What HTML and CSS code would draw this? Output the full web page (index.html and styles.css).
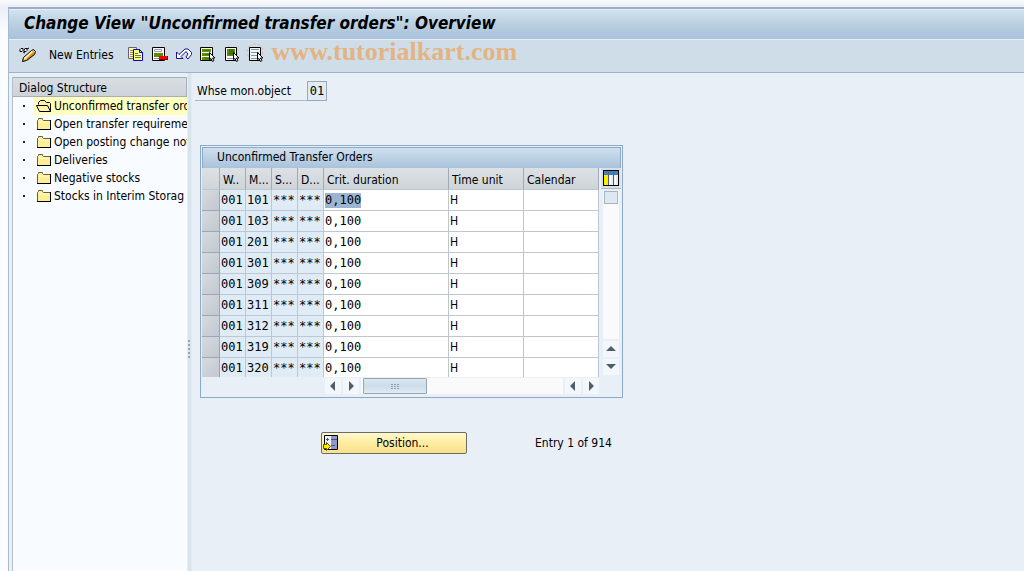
FILE: index.html
```html
<!DOCTYPE html>
<html lang="en">

<head>
    <meta charset="UTF-8">
    <meta name="viewport" content="width=device-width, initial-scale=1.0">
    <title>Change View "Unconfirmed transfer orders": Overview</title>
    <link rel="stylesheet" href="styles.css">
</head>

<body>

    <!-- Folder shapes used by the tree -->
    <svg class="defs" aria-hidden="true">
        <symbol id="folder" viewBox="0 0 14 12">
            <path d="M1 2h1V1h4v1h1v1h6v8H1z" fill="#ffee98"/>
            <path d="M.5 11V2.500l1-1V.5h4v1l1 1h7" fill="none" stroke="#6b6128"/>
            <path d="M0 11.500h14M13.500 2v10" fill="none" stroke="#000"/>
            <path d="M2 4h10" stroke="#fffbe0"/>
        </symbol>
        <symbol id="folder-open" viewBox="0 0 16 12">
            <path d="M2.500 4.500V2.500l2-2h4l2 2h3l1 1V11.500h-11l-3-6h11l3 6" fill="#fff3a8" stroke="#000"/>
        </symbol>
        <symbol id="cursor" viewBox="0 0 7 10">
            <path d="M.5.5v7l1.500-1 1.500 3 1.500-1-1.500-2.500h2.500z" fill="#fff" stroke="#000"/>
        </symbol>
    </svg>

    <div class="window">
        <h1 class="title">Change View "Unconfirmed transfer orders": Overview</h1>

        <div class="toolbar">
            <button type="button" class="tool" aria-label="Display / Change">
                <svg width="16" height="16" viewBox="0 0 16 16">
                    <path d="M0 2.500l1-1h2v2l-1 1H0zM4 3.500l1-2h2v2l-1 1H4zM7 2l2-1M3 5l2 1" fill="#fff" stroke="#000"/>
                    <path d="M3 12l8-8 3-1 1 3-8 7-4 2z" fill="#ffb031"/>
                    <path d="M4 12l8-8" stroke="#fff3c0" stroke-width="2"/>
                    <path d="M7 13l7-7" stroke="#e58a12" stroke-width="2"/>
                    <path d="M2.500 14.500l1-4 8-7 2-1 2 2-1 3-8 6z" fill="none" stroke="#000"/>
                </svg>
            </button>
            <button type="button" class="tool tool-text">New Entries</button>
            <button type="button" class="tool" aria-label="Copy As">
                <svg width="16" height="16" viewBox="0 0 16 16">
                    <path d="M.5.5h8v11h-8z" fill="#fff7a0" stroke="#666"/>
                    <path d="M2 3.500h4M2 5.500h4M2 7.500h4M2 9.500h4" stroke="#888"/>
                    <path d="M5.500 2.500h6l3 3v8h-9z" fill="#ffff80" stroke="#0000d0"/>
                    <path d="M11.500 2.500v3h3" fill="none" stroke="#0000d0"/>
                    <path d="M7 6.500h3M7 8.500h6M7 10.500h6" stroke="#6a7a50"/>
                </svg>
            </button>
            <button type="button" class="tool" aria-label="Delete">
                <svg width="16" height="16" viewBox="0 0 16 16">
                    <path d="M.5.5h12v13H.5z" fill="#fff" stroke="#000"/>
                    <path d="M2.500 2.500h7v2h-7z" fill="#fff" stroke="#9d9dc0"/>
                    <path d="M2 6h9v4H2z" fill="#5c8c00"/>
                    <path d="M2 11.500h5" stroke="#8d8db8"/>
                    <path d="M7 9h9v4H7z" fill="#800"/>
                    <path d="M7 9h8v3H7z" fill="#f00"/>
                </svg>
            </button>
            <button type="button" class="tool" aria-label="Undo Change">
                <svg width="16" height="16" viewBox="0 0 16 16">
                    <path d="M.5 5v6.500H7L5 9.500l5-5 2 2.500-2 3 2 2 3.500-4.500v-2L12 2H9L3 7.500z" fill="#fff" stroke="#161686"/>
                </svg>
            </button>
            <button type="button" class="tool" aria-label="Select All">
                <svg width="16" height="16" viewBox="0 0 16 16">
                    <path d="M.5.5h12v13H.5z" fill="#fff" stroke="#000"/>
                    <path d="M2 2h9v3H2zM2 6h9v3H2zM2 10h9v3H2z" fill="#5c8c00"/>
                    <path d="M5 3.500h4M5 7.500h4M5 11.500h4" stroke="#44740a"/>
                    <use href="#cursor" x="9" y="5" width="7" height="10"/>
                </svg>
            </button>
            <button type="button" class="tool" aria-label="Select Block">
                <svg width="16" height="16" viewBox="0 0 16 16">
                    <path d="M1.500.5h11v13h-11z" fill="#fff" stroke="#000"/>
                    <path d="M3 2h8v7H3z" fill="#5c8c00"/>
                    <path d="M5 2h5v6H5z" fill="#44740a"/>
                    <path d="M3 11.500h6" stroke="#8d8db8"/>
                    <use href="#cursor" x="9" y="5" width="7" height="10"/>
                </svg>
            </button>
            <button type="button" class="tool" aria-label="Deselect All">
                <svg width="16" height="16" viewBox="0 0 16 16">
                    <circle cx="7" cy="5" r="8" fill="none" stroke="#dcb9a0" stroke-dasharray="3 2"/>
                    <path d="M1.500.5h11v13h-11z" fill="#f4f6f8" stroke="#000"/>
                    <path d="M3 2.500h8M3 5.500h8M3 8.500h6M3 11.500h6" stroke="#7f97ac"/>
                    <use href="#cursor" x="9" y="5" width="7" height="10"/>
                </svg>
            </button>
            <span class="watermark">www.tutorialkart.com</span>
        </div>

        <div class="content">
            <nav class="tree">
                <h2>Dialog Structure</h2>
                <ul>
                    <li class="active"><a href="#"><svg width="16" height="12"><use href="#folder-open"/></svg>Unconfirmed transfer orders</a></li>
                    <li><a href="#"><svg width="16" height="12"><use href="#folder"/></svg>Open transfer requirements</a></li>
                    <li><a href="#"><svg width="16" height="12"><use href="#folder"/></svg>Open posting change notices</a></li>
                    <li><a href="#"><svg width="16" height="12"><use href="#folder"/></svg>Deliveries</a></li>
                    <li><a href="#"><svg width="16" height="12"><use href="#folder"/></svg>Negative stocks</a></li>
                    <li><a href="#"><svg width="16" height="12"><use href="#folder"/></svg>Stocks in Interim Storag</a></li>
                </ul>
            </nav>
            <div class="splitter"><i></i></div>

            <main class="main">
                <div class="field">
                    <label for="object">Whse mon.object</label>
                    <input type="text" id="object" value="01" readonly>
                </div>

                <section class="panel">
                    <h2>Unconfirmed Transfer Orders</h2>
                    <div class="grid">
                        <div class="table-clip">
                            <table>
                                <colgroup>
                                    <col class="c-sel"><col class="c-key"><col class="c-key"><col class="c-key"><col class="c-key">
                                    <col class="c-crit"><col class="c-unit"><col class="c-unit">
                                </colgroup>
                                <thead>
                                    <tr>
                                        <th></th>
                                        <th>W..</th>
                                        <th>M...</th>
                                        <th>S...</th>
                                        <th>D...</th>
                                        <th>Crit. duration</th>
                                        <th>Time unit</th>
                                        <th>Calendar</th>
                                    </tr>
                                </thead>
                                <tbody id="rows"></tbody>
                            </table>
                        </div>
                        <div class="vscroll">
                            <button type="button" class="config" aria-label="Configuration">
                                <svg width="16" height="16" viewBox="0 0 16 16">
                                    <path d="M0 0h16v16H0z" fill="#000"/>
                                    <path d="M1 1h14v14H1z" fill="#e8edf2"/>
                                    <path d="M1 1h14v4H1z" fill="#3e80c2"/>
                                    <path d="M1 5h5v10H1z" fill="#ffeb00"/>
                                    <path d="M5.500 2v13M10.500 2v13" stroke="#53616b"/>
                                    <path d="M7.500 6v8M12.500 6v8" stroke="#fff"/>
                                </svg>
                            </button>
                            <div class="vtrack"><i class="vthumb"></i></div>
                            <button type="button" class="arrow" aria-label="Scroll up"><svg width="10" height="6"><path d="M0 5l5-5 5 5z"/></svg></button>
                            <button type="button" class="arrow" aria-label="Scroll down"><svg width="10" height="6"><path d="M0 0l5 5 5-5z"/></svg></button>
                        </div>
                        <div class="hscroll">
                            <button type="button" class="arrow" aria-label="First column"><svg width="6" height="10"><path d="M5 0L0 5l5 5z"/></svg></button>
                            <button type="button" class="arrow" aria-label="Next column"><svg width="6" height="10"><path d="M1 0l5 5-5 5z"/></svg></button>
                            <div class="htrack">
                                <div class="hthumb"><svg width="9" height="5"><path d="M0 .5h2M3 .5h2M6 .5h2M0 2.500h2M3 2.500h2M6 2.500h2M0 4.500h2M3 4.500h2M6 4.500h2" stroke="#91a1af"/></svg></div>
                            </div>
                            <button type="button" class="arrow" aria-label="Previous column"><svg width="6" height="10"><path d="M5 0L0 5l5 5z"/></svg></button>
                            <button type="button" class="arrow" aria-label="Last column"><svg width="6" height="10"><path d="M1 0l5 5-5 5z"/></svg></button>
                        </div>
                    </div>
                </section>

                <div class="footer">
                    <button type="button" class="position">
                        <svg width="16" height="16" viewBox="0 0 16 16">
                            <path d="M1.500.5h13v14h-13z" fill="#eef2f6" stroke="#000"/>
                            <path d="M8 1h6v13H8z" fill="#8f98c8"/>
                            <path d="M3 4.500h3M4.500 3v3M8 4.500h6M8 10.500h4" stroke="#485478"/>
                            <path d="M.5 9.500h3v-2l4 4-4 4v-2h-3z" fill="#ffee00" stroke="#5a4c00"/>
                        </svg>
                        <span>Position...</span>
                    </button>
                    <span>Entry 1 of 914</span>
                </div>
            </main>
        </div>
    </div>

    <script src="script.js"></script>
</body>

</html>
```

FILE: styles.css
```css
* {
    box-sizing: border-box;
}

body {
    margin: 0;
    padding: 7px 0 0 8px;
    min-height: 100vh;
    display: flex;
    background: linear-gradient(#fafbfd, #eaeef5 7px, #fafcff 30px);
    font-family: 'DejaVu Sans Condensed', Tahoma, 'DejaVu Sans', sans-serif;
    font-size: 12px;
    line-height: 18px;
    color: #000;
}

button, input {
    font: inherit;
    color: inherit;
    border: 0;
    padding: 0;
    margin: 0;
    border-radius: 0;
    background: none;
}

svg {
    display: block;
    overflow: visible;
    flex: none;
}

.defs {
    position: absolute;
    width: 0;
    height: 0;
}

.window {
    flex: 1;
    min-width: 0;
    display: flex;
    flex-direction: column;
    border-top: 2px solid #9bb0c6;
    border-left: 1px solid #a9bacb;
    background: #e8eff7;
}

/* Title and toolbar */
.title {
    margin: 0;
    padding: 0 15px;
    height: 31px;
    line-height: 26px;
    font-size: 17px;
    font-style: italic;
    border-top: 1px solid #e6eff8;
    border-bottom: 1px solid #e6eff8;
    background: linear-gradient(#d2e2f0, #b9cfdf 50%, #a9c2dc);
}

.toolbar {
    display: flex;
    align-items: center;
    gap: 8px;
    height: 33px;
    padding: 0 11px 2px;
    background: #cfdde8;
    border-bottom: 1px solid #9fb3c9;
}

.tool-text {
    margin: 0 6px 0 5px;
}

.watermark {
    font-family: 'Liberation Serif', serif;
    font-size: 26px;
    font-weight: bold;
    line-height: 26px;
    color: #e3b483;
    padding-bottom: 6px;
}

.content {
    flex: 1;
    display: flex;
}

/* Dialog structure tree */
.tree {
    width: 175px;
    margin: 4px 1px 0 3px;
    border-left: 1px solid #b5bfc9;
    background: #f8fbff;
    overflow: hidden;
}

.tree h2 {
    margin: 0;
    padding: 0 6px;
    height: 20px;
    line-height: 20px;
    font-size: 12px;
    font-weight: normal;
    background: linear-gradient(#d9dee3, #cdd3da);
    border: 1px solid #a5afba;
    border-left: 0;
}

.tree ul {
    margin: 0;
    padding: 0;
    list-style: none;
}

.tree li {
    display: flex;
    align-items: center;
    height: 18px;
}

.tree li::before {
    content: '';
    flex: none;
    width: 2px;
    height: 2px;
    margin: 0 8px 0 10px;
    background: #222;
}

.tree a {
    flex: 1;
    display: flex;
    align-items: center;
    gap: 2px;
    padding-left: 3px;
    color: inherit;
    text-decoration: none;
    white-space: nowrap;
}

.tree .active a {
    background: #ffffbe;
}

.splitter {
    width: 4px;
    display: flex;
    align-items: center;
    border-right: 1px solid #e2ebf1;
    background: #d8e4eb;
}

.splitter i {
    width: 2px;
    height: 18px;
    margin-top: 54px;
    background: repeating-linear-gradient(#98a4b0 0 2px, #d8e4eb 2px 4px);
}

/* Main area */
.main {
    flex: 1;
    min-width: 0;
    padding: 8px 3px;
}

.field {
    display: flex;
    height: 20px;
    margin-bottom: 44px;
}

.field label {
    width: 112px;
    padding: 2px 2px 0;
    line-height: 17px;
    border-bottom: 1px solid #b4b4b4;
}

.field input {
    width: 20px;
    text-align: center;
    border: 1px solid #9da8b2;
    background: #dfebf5;
    font-family: 'DejaVu Sans Mono', monospace;
}

.panel {
    width: fit-content;
    margin-left: 5px;
    padding: 1px;
    border: 1px solid #8ca9c8;
}

.panel h2 {
    margin: 0;
    padding: 0 14px;
    height: 21px;
    line-height: 19px;
    font-size: 12px;
    font-weight: normal;
    border: 1px solid #8ca9c8;
    border-bottom: 0;
    background: linear-gradient(#cfe0ee, #a9c2dc);
}

.grid {
    display: grid;
    grid-template-columns: auto 20px;
    column-gap: 2px;
}

.table-clip {
    height: 209px;
    overflow: hidden;
}

table {
    width: 397px;
    border-collapse: separate;
    border-spacing: 0;
    table-layout: fixed;
}

.c-sel {
    width: 18px;
}

.c-key {
    width: 26px;
}

.c-crit {
    width: 125px;
}

.c-unit {
    width: 75px;
}

th, td {
    height: 21px;
    padding: 0 0 0 1px;
    overflow: hidden;
    white-space: nowrap;
    text-align: left;
    font-weight: normal;
    line-height: 18px;
    border-right: 1px solid #bcc7d3;
    border-bottom: 1px solid #bcc7d3;
}

th {
    height: 22px;
    padding: 3px 0 0 3px;
    background: linear-gradient(#dce1e5, #cfd4d9);
    border-right-color: #9fabb8;
}

td {
    background: #fff;
    font-family: 'DejaVu Sans Mono', monospace;
}

td.key {
    background: #dfebf5;
}

td.selector {
    padding: 0;
    border-color: #9aa6b2;
}

td button {
    display: block;
    width: 100%;
    height: 20px;
    background: linear-gradient(135deg, #d6dae0, #c2c8d0);
}

td input {
    display: block;
    width: 100%;
    height: 18px;
}

td.unit input {
    font-family: 'DejaVu Sans Condensed', Tahoma, sans-serif;
}

td input.marked {
    width: 36px;
    height: 15px;
    background: #9bb5d3;
}

/* Scroll bars */
.vscroll {
    display: flex;
    flex-direction: column;
    align-items: center;
    gap: 2px;
    padding-bottom: 2px;
}

.config {
    width: 100%;
    height: 21px;
    display: grid;
    place-items: center;
    border-bottom: 1px solid #aeb8c2;
    background: #d9dfe4;
}

.vtrack {
    flex: 1;
    width: 16px;
    background: #fafafb;
}

.vthumb {
    display: block;
    height: 13px;
    margin: 0 1px;
    border: 1px solid #a9b4be;
    background: #dce8f2;
}

.arrow {
    width: 16px;
    height: 16px;
    display: grid;
    place-items: center;
    background: #f3f6fb;
    fill: #4d6069;
}

.hscroll {
    display: flex;
    gap: 2px;
    padding: 1px 0 2px 123px;
}

.htrack {
    flex: 1;
    padding-left: 2px;
    background: #fafafb;
}

.hthumb {
    width: 64px;
    height: 16px;
    display: grid;
    place-items: center;
    border: 1px solid #98a6b3;
    border-radius: 1px;
    background: linear-gradient(#dbe6f0, #cddce8 50%, #deebf5);
}

/* Position button and counter */
.footer {
    display: flex;
    align-items: center;
    gap: 68px;
    margin: 34px 0 0 126px;
}

.position {
    display: flex;
    align-items: center;
    width: 146px;
    height: 22px;
    padding-left: 1px;
    border: 1px solid #6c6c66;
    border-radius: 2px;
    background: linear-gradient(#fff8cf, #ffeda0 50%, #f9e08c);
}

.position span {
    flex: 1;
    text-align: center;
}
```

FILE: script.js
```js
const types = ['101', '103', '201', '301', '309', '311', '312', '319', '320'];

function buildRow(type, index) {
    const marked = index === 0 ? ' class="marked"' : '';
    return `<tr>
        <td class="selector"><button type="button" aria-label="Select row ${index + 1}"></button></td>
        <td class="key">001</td>
        <td class="key">${type}</td>
        <td class="key">***</td>
        <td class="key">***</td>
        <td><input type="text" value="0,100" aria-label="Crit. duration"${marked}></td>
        <td class="unit"><input type="text" value="H" aria-label="Time unit"></td>
        <td><input type="text" value="" aria-label="Calendar"></td>
    </tr>`;
}

document.getElementById('rows').innerHTML = types.map(buildRow).join('');
```
